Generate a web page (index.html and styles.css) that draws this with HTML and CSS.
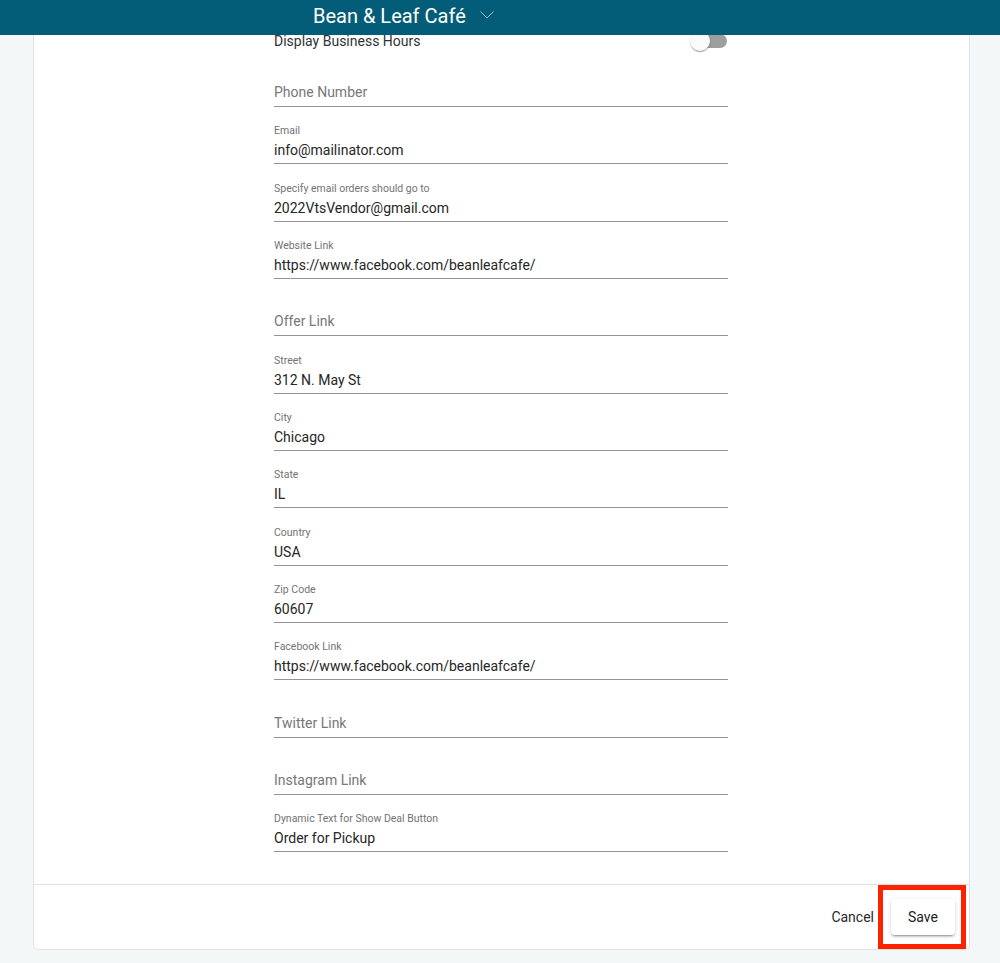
FILE: index.html
```html
<!DOCTYPE html>
<html lang="en">
<head>
<meta charset="utf-8">
<title>Bean &amp; Leaf Café</title>
<link rel="stylesheet" href="styles.css">
</head>
<body>
<header class="topbar">
  <span class="brand">Bean &amp; Leaf Café</span>
  <svg class="chevron" width="14" height="8" viewBox="0 0 14 8"><path d="M0.5 0.5 L7 7 L13.5 0.5" fill="none" stroke="currentColor" stroke-width="1"/></svg>
</header>
<main class="card">
  <div class="card-body">
    <form class="form">
      <div class="toggle-row">
        <span class="toggle-label">Display Business Hours</span>
        <span class="toggle"><span class="track"></span><span class="thumb"></span></span>
      </div>
      <div class="fields">
        <div class="field"><span class="placeholder">Phone Number</span></div>
        <div class="field"><span class="label">Email</span><span class="value">info@mailinator.com</span></div>
        <div class="field"><span class="label">Specify email orders should go to</span><span class="value">2022VtsVendor@gmail.com</span></div>
        <div class="field"><span class="label">Website Link</span><span class="value">https://www.facebook.com/beanleafcafe/</span></div>
        <div class="field"><span class="placeholder">Offer Link</span></div>
        <div class="field"><span class="label">Street</span><span class="value">312 N. May St</span></div>
        <div class="field"><span class="label">City</span><span class="value">Chicago</span></div>
        <div class="field"><span class="label">State</span><span class="value">IL</span></div>
        <div class="field"><span class="label">Country</span><span class="value">USA</span></div>
        <div class="field"><span class="label">Zip Code</span><span class="value">60607</span></div>
        <div class="field"><span class="label">Facebook Link</span><span class="value">https://www.facebook.com/beanleafcafe/</span></div>
        <div class="field"><span class="placeholder">Twitter Link</span></div>
        <div class="field"><span class="placeholder">Instagram Link</span></div>
        <div class="field"><span class="label">Dynamic Text for Show Deal Button</span><span class="value">Order for Pickup</span></div>
      </div>
    </form>
  </div>
  <div class="card-footer">
    <button class="btn btn-flat" type="button">Cancel</button>
    <button class="btn btn-raised" type="button">Save</button>
  </div>
</main>
<div class="highlight"></div>
</body>
</html>
```
FILE: styles.css
```css
* { box-sizing: border-box; }

html, body {
  margin: 0;
  padding: 0;
  background: #f4f7f7;
  font-family: Roboto, "Liberation Sans", Arial, sans-serif;
}

.topbar {
  position: relative;
  z-index: 2;
  height: 35px;
  background: #045d78;
  color: #fff;
  display: flex;
  align-items: center;
  padding-left: 313px;
}

.brand {
  font-size: 20px;
  line-height: 24px;
  margin-top: -3px;
}

.chevron {
  color: #9fbcc6;
  margin-left: 14px;
  margin-top: -5px;
}

.card {
  display: block;
  width: 937px;
  margin-left: 33px;
  background: #fff;
  border: 1px solid #e2e2e2;
  border-top: none;
  border-radius: 0 0 5px 5px;
}

.card-body {
  padding-bottom: 32px;
  padding-right: 1px;
}

.form {
  width: 454px;
  margin: 0 auto;
}

.toggle-row {
  height: 12px;
  display: flex;
  align-items: center;
  justify-content: space-between;
}

.toggle-label {
  font-size: 14px;
  line-height: 14px;
  color: #333;
}

.toggle {
  position: relative;
  width: 36px;
  height: 14px;
  margin-right: 1px;
}

.track {
  display: block;
  width: 36px;
  height: 14px;
  border-radius: 7px;
  background: #9e9e9e;
}

.thumb {
  position: absolute;
  left: -1px;
  top: -3px;
  width: 20px;
  height: 20px;
  border-radius: 50%;
  background: #fafafa;
  box-shadow: 0 2px 1px -1px rgba(0,0,0,.2), 0 1px 1px 0 rgba(0,0,0,.14), 0 1px 3px 0 rgba(0,0,0,.12);
}

.fields {
  margin-top: 2.67px;
}

.field {
  height: 57.33px;
  display: flex;
  flex-direction: column;
  justify-content: flex-end;
  border-bottom: 1px solid #949494;
}

.label {
  font-size: 10.5px;
  line-height: 12px;
  color: #737373;
  margin-bottom: 3px;
}

.value, .placeholder {
  font-size: 14px;
  line-height: 20px;
  padding-bottom: 3px;
  color: #262626;
}

.placeholder {
  color: #777;
  padding-bottom: 4px;
}

.card-footer {
  height: 65px;
  border-top: 1px solid #e2e2e2;
  display: flex;
  justify-content: flex-end;
  align-items: center;
  padding-right: 14px;
}

.btn {
  font-family: Roboto, "Liberation Sans", Arial, sans-serif;
  font-size: 14px;
  height: 36px;
  line-height: 36px;
  border: none;
  border-radius: 4px;
  background: transparent;
  color: #2a2a2a;
  padding: 0 16px;
  cursor: pointer;
}

.btn-flat {
  margin-right: 1px;
}

.btn-raised {
  width: 64px;
  background: #fff;
  color: #222;
  box-shadow: 0 3px 1px -2px rgba(0,0,0,.2), 0 2px 2px 0 rgba(0,0,0,.14), 0 1px 5px 0 rgba(0,0,0,.12);
}

.highlight {
  position: absolute;
  left: 878px;
  top: 885px;
  width: 88px;
  height: 64px;
  border: 5px solid #fe2200;
  pointer-events: none;
}
```
